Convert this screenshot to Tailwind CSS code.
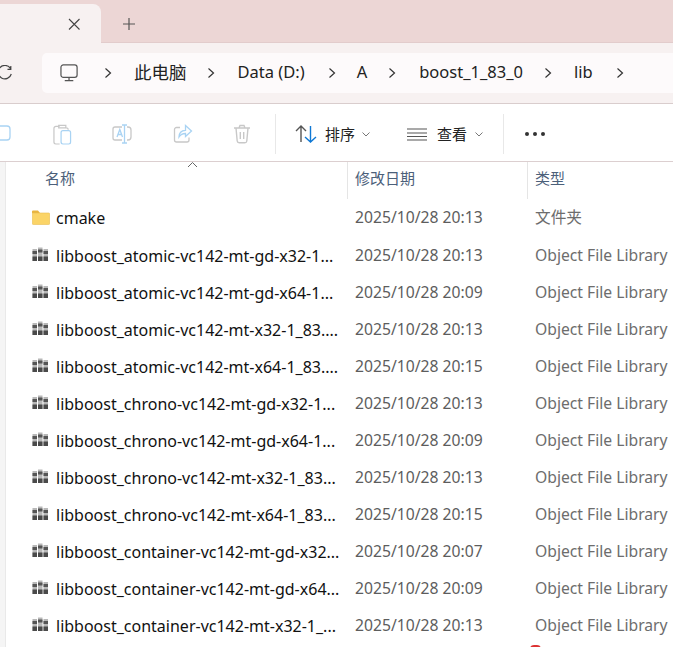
<!DOCTYPE html>
<html lang="en">
<head>
    <meta charset="UTF-8">
    <title>lib</title>
    <script src="https://cdn.jsdelivr.net/npm/@tailwindcss/browser@4"></script>
</head>
<body class="bg-white">
    <div class="relative w-[673px] h-[647px] overflow-hidden font-['Noto_Sans','Noto_Sans_CJK_SC',sans-serif] text-[#1c1c1c]">
        <!-- tab strip -->
        <div class="flex h-[43px] bg-[#ecd6d5] border-b border-[#e2cccc]">
            <div class="w-[101px] mt-[4px] h-[39px] bg-[#f7f1f1] rounded-tr-[8px] flex items-center justify-end pr-[20px]">
                <svg width="14" height="14" viewBox="0 0 14 14" fill="none" stroke="#444" stroke-width="1.1"><path d="M2 2l10.500 10.500M12.500 2L2 12.500"/></svg>
            </div>
            <div class="ml-[21px] mt-[17px] h-[16px]">
                <svg width="14" height="14" viewBox="0 0 14 14" fill="none" stroke="#555" stroke-width="1.2"><path d="M7 1v12M1 7h12"/></svg>
            </div>
        </div>

        <!-- address row -->
        <div class="flex items-center h-[61px] bg-[#f7f1f1] border-b border-[#d9cdcd]">
            <svg class="w-[42px] shrink-0" width="42" height="16" viewBox="0 0 42 16" fill="none" stroke="#444" stroke-width="1.2"><path d="M11.500 3.500A6.700 6.700 0 1 0 12.300 9M11.800 1v3.300H8.500" transform="translate(-1 0)"/></svg>
            <div class="flex items-center flex-1 h-[40px] bg-[#fdfafb] rounded-l-[5px] pl-[18px] text-[16.5px] text-[#222] whitespace-nowrap">
                <svg width="19" height="19" viewBox="0 0 20 20" fill="none" stroke="#555" stroke-width="1.3"><rect x="1" y="1" width="17" height="13" rx="2.500"/><path d="M9.500 14v3M5 17.500h9"/></svg>
                <svg class="ml-[25px]" width="8" height="12" viewBox="0 0 8 12" fill="none" stroke="#333" stroke-width="1.200"><path d="M1.500 1.500L6.500 6l-5 4.500"/></svg>
                <span class="ml-[22px] -mt-[2px] text-[17.5px]">此电脑</span>
                <svg class="ml-[20px]" width="8" height="12" viewBox="0 0 8 12" fill="none" stroke="#333" stroke-width="1.200"><path d="M1.500 1.500L6.500 6l-5 4.500"/></svg>
                <span class="ml-[23px] -mt-[2px]">Data (D:)</span>
                <svg class="ml-[23px]" width="8" height="12" viewBox="0 0 8 12" fill="none" stroke="#333" stroke-width="1.200"><path d="M1.500 1.500L6.500 6l-5 4.500"/></svg>
                <span class="ml-[21px] -mt-[2px]">A</span>
                <svg class="ml-[21px]" width="8" height="12" viewBox="0 0 8 12" fill="none" stroke="#333" stroke-width="1.200"><path d="M1.500 1.500L6.500 6l-5 4.500"/></svg>
                <span class="ml-[23px] -mt-[2px]">boost_1_83_0</span>
                <svg class="ml-[21px]" width="8" height="12" viewBox="0 0 8 12" fill="none" stroke="#333" stroke-width="1.200"><path d="M1.500 1.500L6.500 6l-5 4.500"/></svg>
                <span class="ml-[22px] -mt-[2px]">lib</span>
                <svg class="ml-[23px]" width="8" height="12" viewBox="0 0 8 12" fill="none" stroke="#333" stroke-width="1.200"><path d="M1.500 1.500L6.500 6l-5 4.500"/></svg>
            </div>
        </div>

        <!-- command bar -->
        <div class="flex items-center h-[58px] pt-[3px] bg-white border-b border-[#dccfd0] text-[15px] text-[#222] whitespace-nowrap">
            <svg class="-ml-[6px]" width="18" height="18" viewBox="0 0 18 18" fill="none" stroke="#a9d3f3" stroke-width="1.300"><rect x="1" y="1" width="15" height="14" rx="3"/></svg>
            <svg class="ml-[41px]" width="19" height="21" viewBox="0 0 20 22" fill="none" stroke-width="1.300"><path stroke="#c8c8c8" d="M7 2.500H3a2 2 0 0 0-2 2V19a2 2 0 0 0 2 2h4M6 1.500h7.500v2.500H6zM14 4a2 2 0 0 1 2 2"/><rect stroke="#a9d3f3" x="8.500" y="7" width="10" height="14" rx="2"/></svg>
            <svg class="ml-[40px]" width="20" height="20" viewBox="0 0 20 20" fill="none" stroke-width="1.300"><path stroke="#c8c8c8" d="M10 3H3a2 2 0 0 0-2 2v9a2 2 0 0 0 2 2h7M15 3h1a3 3 0 0 1 3 3v7a3 3 0 0 1-3 3h-1"/><path stroke="#a9d3f3" d="M5 13l2.800-7.500L10.500 13M6 10.500h3.500M10 1h5M12.500 1v18M10 19h5"/></svg>
            <svg class="ml-[41px]" width="20" height="20" viewBox="0 0 20 20" fill="none" stroke-width="1.300"><path stroke="#c8c8c8" d="M7 3.500H3.500a2 2 0 0 0-2 2V16a2 2 0 0 0 2 2H14a2 2 0 0 0 2-2v-2.500"/><path stroke="#a9d3f3" d="M12.500 1.500L18.500 7l-6 5.500V9.500c-3 0-5 1-6.500 3.500 0-4 2.500-6.500 6.500-6.700z"/></svg>
            <svg class="ml-[40px]" width="18" height="20" viewBox="0 0 18 20" fill="none" stroke="#c8c8c8" stroke-width="1.400"><path d="M1 4h16M6 4l1-2.500h4L12 4M3 4l1.200 13a2 2 0 0 0 2 1.800h5.600a2 2 0 0 0 2-1.800L15 4M7.300 8v7M10.700 8v7"/></svg>
            <div class="ml-[24px] w-px h-[40px] bg-[#e8e8e8]"></div>
            <svg class="ml-[19px]" width="22" height="18" viewBox="0 0 22 18" fill="none" stroke-width="1.400"><path stroke="#555" d="M1 6l5-5 5 5M6 1v16"/><path stroke="#0f78d4" d="M10 12l5.500 5 5.500-5M15.500 17V1"/></svg>
            <span class="ml-[8px]">排序</span>
            <svg class="ml-[7px]" width="8" height="5" viewBox="0 0 8 5" fill="none" stroke="#777"><path d="M.5.500L4 4 7.500.500"/></svg>
            <svg class="ml-[37px]" width="20" height="13" viewBox="0 0 20 13" fill="none" stroke="#555" stroke-width="1.200"><path d="M0 1h20M0 5h20M0 8.500h20M0 12h20"/></svg>
            <span class="ml-[10px]">查看</span>
            <svg class="ml-[8px]" width="8" height="5" viewBox="0 0 8 5" fill="none" stroke="#777"><path d="M.5.500L4 4 7.500.500"/></svg>
            <div class="ml-[20px] w-px h-[40px] bg-[#e8e8e8]"></div>
            <div class="ml-[21px] flex gap-[4px]">
                <span class="w-[4px] h-[4px] rounded-full bg-[#333]"></span>
                <span class="w-[4px] h-[4px] rounded-full bg-[#333]"></span>
                <span class="w-[4px] h-[4px] rounded-full bg-[#333]"></span>
            </div>
        </div>

        <!-- file list -->
        <div class="flex">
            <div class="w-[6px] shrink-0 h-[485px] bg-[#f5f5f5] border-r border-[#e9e9e9]"></div>
            <div class="flex-1 min-w-0">
                <div class="relative grid grid-cols-[341px_180px_1fr] h-[37px] text-[15px] text-[#4c607a] whitespace-nowrap">
                    <div class="pl-[39px] pt-[5px]">名称</div>
                    <div class="pl-[7px] pt-[5px] border-l border-[#e5e5e5]">修改日期</div>
                    <div class="pl-[7px] pt-[5px] border-l border-[#e5e5e5]">类型</div>
                    <svg class="absolute left-[181px] top-0" width="11" height="6" viewBox="0 0 11 6" fill="none" stroke="#666"><path d="M1 5l4.500-4.500L10 5"/></svg>
                </div>
                <div class="flex flex-col text-[15.7px] whitespace-nowrap" id="rows">
                    <div class="grid grid-cols-[341px_180px_1fr] items-center h-[38px] pb-[1px]">
                        <div class="flex items-center pl-[26px] text-[#111] text-[16px]">
                            <svg width="18" height="15" viewBox="0 0 18 15"><path fill="#e9b43f" d="M0 1.500A1 1 0 0 1 1 .500h5l2 2.500H0z"/><path fill="#fbd467" stroke="#e9bd52" stroke-width=".6" d="M.3 3h16.400a1 1 0 0 1 1 1v9.500a1 1 0 0 1-1 1H1.300a1 1 0 0 1-1-1z"/></svg>
                            <span class="ml-[6px]">cmake</span>
                        </div>
                        <div class="pl-[8px] text-[#5d5d5d]">2025/10/28 20:13</div>
                        <div class="pl-[8px] text-[#6d6d6d]">文件夹</div>
                    </div>
                </div>
            </div>
        </div>
        <div class="absolute left-[530px] top-[645px] w-[11px] h-[4px] rounded-t-full bg-[#d33]"></div>
    </div>

    <script>
        // file rows, filled from data
        const files = [
            ['libboost_atomic-vc142-mt-gd-x32-1...', '2025/10/28 20:13'],
            ['libboost_atomic-vc142-mt-gd-x64-1...', '2025/10/28 20:09'],
            ['libboost_atomic-vc142-mt-x32-1_83....', '2025/10/28 20:13'],
            ['libboost_atomic-vc142-mt-x64-1_83....', '2025/10/28 20:15'],
            ['libboost_chrono-vc142-mt-gd-x32-1...', '2025/10/28 20:13'],
            ['libboost_chrono-vc142-mt-gd-x64-1...', '2025/10/28 20:09'],
            ['libboost_chrono-vc142-mt-x32-1_83...', '2025/10/28 20:13'],
            ['libboost_chrono-vc142-mt-x64-1_83...', '2025/10/28 20:15'],
            ['libboost_container-vc142-mt-gd-x32...', '2025/10/28 20:07'],
            ['libboost_container-vc142-mt-gd-x64...', '2025/10/28 20:09'],
            ['libboost_container-vc142-mt-x32-1_...', '2025/10/28 20:13'],
        ];
        const book = (x, y) => `<rect x="${x}" y="${y}" width="4.500" height="${14 - y}" fill="#b8b8b8"/>
            <rect x="${x}" y="${y + 2}" width="4.500" height="3" fill="#555"/>
            <rect x="${x}" y="9.500" width="4.500" height="4.500" fill="#4a4a4a"/>`;
        const icon = `<svg class="-mt-[3px]" width="18" height="14" viewBox="0 0 18 14">${book(0.5, 2)}${book(6, 0.5)}${book(11.5, 2)}</svg>`;
        document.getElementById('rows').insertAdjacentHTML('beforeend', files.map(([name, date]) => `
            <div class="grid grid-cols-[341px_180px_1fr] items-center h-[37px]">
                <div class="flex items-center pl-[26px] text-[#111] text-[16px]">${icon}<span class="ml-[6px]">${name}</span></div>
                <div class="pl-[8px] text-[#5d5d5d]">${date}</div>
                <div class="pl-[8px] text-[#6d6d6d]">Object File Library</div>
            </div>`).join(''));
    </script>
</body>
</html>
